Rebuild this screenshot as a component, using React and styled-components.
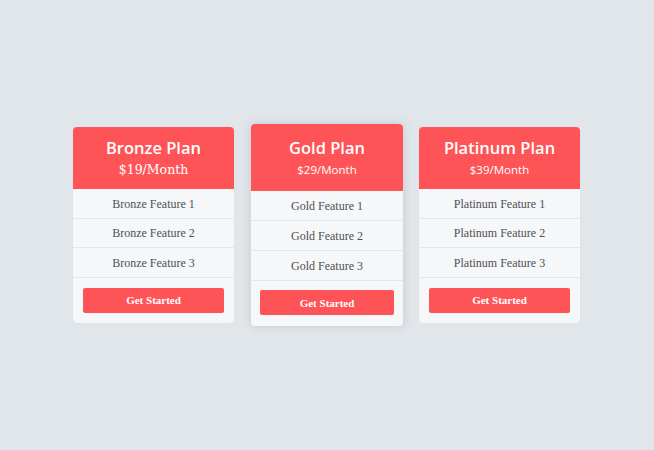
import React from "react";
import styled, { createGlobalStyle } from "styled-components";

const GlobalStyle = createGlobalStyle`
  html, body {
    margin: 0;
    padding: 0;
    background: #e1e6ea;
  }
`;

const Page = styled.div`
  width: 654px;
  height: 450px;
  display: flex;
  align-items: center;
  justify-content: center;
  gap: 16px;
  padding-right: 1px;
  box-sizing: border-box;
`;

const Card = styled.div`
  width: ${(p) => (p.$featured ? "152px" : "161px")};
  margin-left: ${(p) => (p.$featured ? "1px" : "0")};
  background: #f6f7f9;
  border-radius: 4px;
  overflow: hidden;
  box-shadow: ${(p) =>
    p.$featured
      ? "0 0 10px rgba(120, 90, 100, 0.22)"
      : "0 0 2px rgba(0, 0, 0, 0.06)"};
`;

const Header = styled.div`
  background: #ff5457;
  color: #fff;
  text-align: center;
  display: flex;
  flex-direction: column;
  align-items: center;
  justify-content: center;
  height: ${(p) => (p.$featured ? "67px" : "62px")};
  gap: 3px;
  padding-top: ${(p) => (p.$featured ? "2px" : "0")};
  box-sizing: border-box;
`;

const Title = styled.div`
  font-family: "Open Sans", sans-serif;
  font-weight: 600;
  font-size: 16.5px;
  line-height: 20px;
`;

const Price = styled.div`
  font-family: ${(p) =>
    p.$serif ? '"DejaVu Serif", serif' : '"Open Sans", sans-serif'};
  font-size: ${(p) => (p.$serif ? "12.5px" : "11.5px")};
  line-height: 18px;
`;

const Feature = styled.div`
  height: ${(p) => (p.$featured ? "30px" : "29.5px")};
  display: flex;
  align-items: center;
  justify-content: center;
  padding-top: 1px;
  font-family: "Liberation Serif", serif;
  font-size: 12px;
  color: #4d5156;
  border-bottom: 1px solid #e5e8eb;
  box-sizing: border-box;
`;

const Footer = styled.div`
  padding: ${(p) => (p.$featured ? "9px 9px 11px" : "10px")};
`;

const Button = styled.button`
  display: block;
  width: 100%;
  height: 25px;
  border: none;
  border-radius: 2px;
  background: #ff5457;
  color: #fff;
  font-family: "Liberation Serif", serif;
  font-weight: 700;
  font-size: 11px;
  cursor: pointer;
`;

const plans = [
  { name: "Bronze", price: "$19/Month", serif: true },
  { name: "Gold", price: "$29/Month", featured: true },
  { name: "Platinum", price: "$39/Month" },
];

const App = () => {
  return (
    <>
      <GlobalStyle />
      <Page>
        {plans.map((plan) => (
          <Card key={plan.name} $featured={plan.featured}>
            <Header $featured={plan.featured}>
              <Title>{plan.name} Plan</Title>
              <Price $serif={plan.serif}>{plan.price}</Price>
            </Header>
            {[1, 2, 3].map((n) => (
              <Feature key={n} $featured={plan.featured}>
                {plan.name} Feature {n}
              </Feature>
            ))}
            <Footer $featured={plan.featured}>
              <Button>Get Started</Button>
            </Footer>
          </Card>
        ))}
      </Page>
    </>
  );
};

export default App;
